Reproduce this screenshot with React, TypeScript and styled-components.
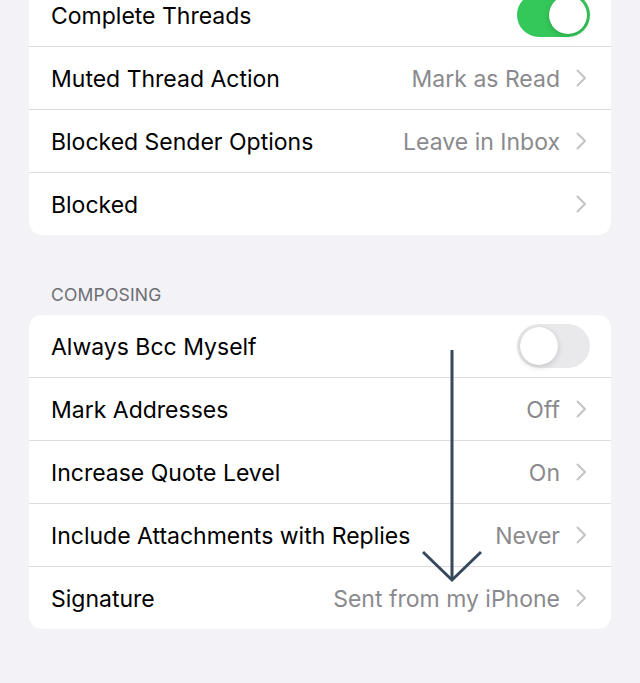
import styled, { createGlobalStyle } from 'styled-components';

const GlobalStyle = createGlobalStyle`
  html, body {
    margin: 0;
    padding: 0;
    background: #f2f2f7;
    overflow: hidden;
  }
  body {
    font-family: Inter, "Liberation Sans", sans-serif;
    -webkit-font-smoothing: antialiased;
  }
`;

const Page = styled.div`
  position: relative;
  width: 640px;
  height: 683px;
  overflow: hidden;
  background: #f2f2f7;
`;

// the list is scrolled a little, so the first row is cut off at the top
const Scroller = styled.div`
  display: flex;
  flex-direction: column;
  padding: 0 29px;
  margin-top: -16px;
`;

const Card = styled.div`
  background: #ffffff;
  border-radius: 13px;
  overflow: hidden;
`;

const SectionHeader = styled.div`
  margin: 49px 0 0 22px;
  height: 31px;
  font-size: 17.5px;
  letter-spacing: 0.2px;
  color: #6d6d72;
`;

const Row = styled.div`
  display: flex;
  align-items: center;
  height: 62px;
  padding: 0 21px 0 22px;

  & + & {
    border-top: 1px solid #dcdce0;
  }
`;

const Label = styled.span`
  flex: 1;
  padding-top: 2px;
  font-size: 23px;
  color: #000000;
  letter-spacing: 0;
`;

const Value = styled.span`
  padding-top: 2px;
  font-size: 23px;
  color: #8a8a8e;
  letter-spacing: 0;
  margin-right: 16px;
`;

const Chevron = styled.svg`
  width: 11px;
  height: 18px;
  margin-right: 3px;
`;

const Track = styled.div<{ $on: boolean }>`
  position: relative;
  width: 73px;
  height: 44px;
  border-radius: 22px;
  background: ${(p) => (p.$on ? '#34c759' : '#e9e9eb')};
`;

const Knob = styled.div<{ $on: boolean }>`
  position: absolute;
  top: 3px;
  left: ${(p) => (p.$on ? '32px' : '3px')};
  width: 38px;
  height: 38px;
  border-radius: 50%;
  background: #ffffff;
  box-shadow: 0 2px 6px rgba(0, 0, 0, 0.15), 0 0 1px rgba(0, 0, 0, 0.12);
`;

const Arrow = styled.svg`
  position: absolute;
  left: 420px;
  top: 348px;
  width: 64px;
  height: 236px;
`;

const Switch = ({ on }: { on: boolean }) => (
  <Track $on={on}>
    <Knob $on={on} />
  </Track>
);

const ChevronIcon = () => (
  <Chevron viewBox="0 0 11 18">
    <path d="M1.5 1.5 L9 9 L1.5 16.5" fill="none" stroke="#c4c4c7" strokeWidth="2" strokeLinecap="round" strokeLinejoin="round" />
  </Chevron>
);

type Item = { label: string; value?: string; toggle?: boolean };

const mailItems: Item[] = [
  { label: 'Complete Threads', toggle: true },
  { label: 'Muted Thread Action', value: 'Mark as Read' },
  { label: 'Blocked Sender Options', value: 'Leave in Inbox' },
  { label: 'Blocked', value: '' },
];

const composingItems: Item[] = [
  { label: 'Always Bcc Myself', toggle: false },
  { label: 'Mark Addresses', value: 'Off' },
  { label: 'Increase Quote Level', value: 'On' },
  { label: 'Include Attachments with Replies', value: 'Never' },
  { label: 'Signature', value: 'Sent from my iPhone' },
];

const SettingsRow = ({ item }: { item: Item }) => (
  <Row>
    <Label>{item.label}</Label>
    {item.toggle !== undefined ? (
      <Switch on={item.toggle} />
    ) : (
      <>
        {item.value ? <Value>{item.value}</Value> : null}
        <ChevronIcon />
      </>
    )}
  </Row>
);

export default function App() {
  return (
    <Page>
      <GlobalStyle />
      <Scroller>
        <Card>
          {mailItems.map((it) => (
            <SettingsRow key={it.label} item={it} />
          ))}
        </Card>
        <SectionHeader>COMPOSING</SectionHeader>
        <Card>
          {composingItems.map((it) => (
            <SettingsRow key={it.label} item={it} />
          ))}
        </Card>
      </Scroller>
      <Arrow viewBox="0 0 64 236">
        <path d="M32 2 L32 232" stroke="#364859" strokeWidth="3" fill="none" />
        <path d="M3 204 L32 232 L61 204" stroke="#364859" strokeWidth="3" fill="none" />
      </Arrow>
    </Page>
  );
}
